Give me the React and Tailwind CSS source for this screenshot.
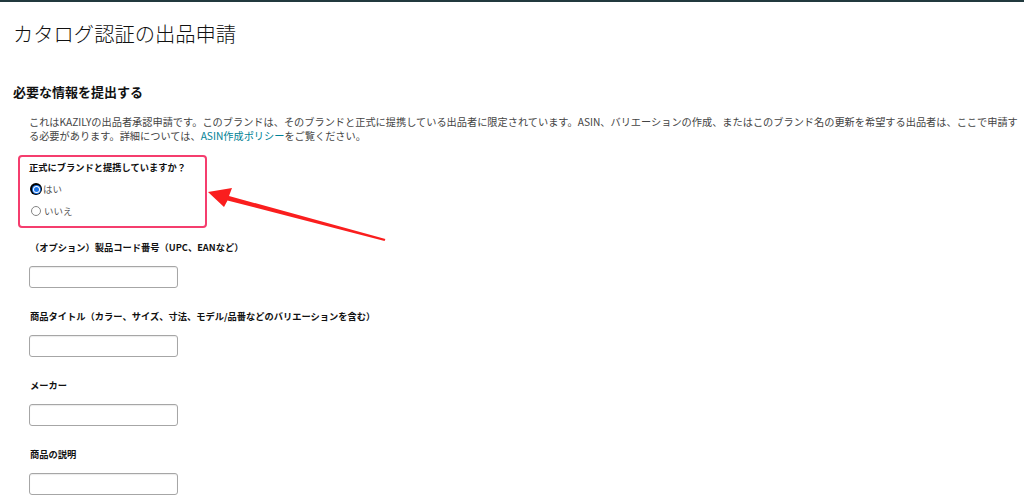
import React from "react";

const jp = { fontFamily: '"Noto Sans CJK JP", "Noto Sans", sans-serif' };

function Field({ label }) {
  return (
    <div className="mb-[21px]">
      <div className="pl-[30px] text-[9.25px] leading-[14px] font-bold text-[#111] mb-[12px]">{label}</div>
      <div className="pl-[29px]">
        <input
          type="text"
          className="block w-[149px] h-[22px] border border-[#a6a6a6] rounded-[3px] bg-white shadow-[inset_0_1px_1px_rgba(0,0,0,0.08)] outline-none"
        />
      </div>
    </div>
  );
}

function Radio({ checked, label }) {
  return (
    <div className="flex items-center h-[22px] pl-[10px]">
      {checked ? (
        <span className="w-[12px] h-[12px] rounded-full bg-black p-[1.5px] flex">
          <span className="w-full h-full rounded-full bg-[#1a73e8] p-[1px] flex">
            <span className="w-full h-full rounded-full bg-white p-[1px] flex">
              <span className="w-full h-full rounded-full bg-[#1a73e8]" />
            </span>
          </span>
        </span>
      ) : (
        <span className="w-[10px] h-[10px] ml-[1px] rounded-full border border-[#858585] bg-white" />
      )}
      <span className={"text-[9.5px] text-[#555] " + (checked ? "ml-[1px]" : "ml-[3px]")}>{label}</span>
    </div>
  );
}

export default function App() {
  return (
    <div className="relative w-[1024px] h-[502px] overflow-hidden bg-white border-t-2 border-[#21393d]" style={jp}>
      {/* page title */}
      <h1 className="pt-[17px] pl-[13px] text-[20.3px] leading-[28px] font-light text-[#111]">
        カタログ認証の出品申請
      </h1>

      <h2 className="mt-[36px] pl-[13px] text-[13px] leading-[18px] font-bold text-[#111]">
        必要な情報を提出する
      </h2>

      <p className="mt-[14px] pl-[29px] text-[10.2px] leading-[14px] text-[#444] whitespace-nowrap">
        これはKAZILYの出品者承認申請です。このブランドは、そのブランドと正式に提携している出品者に限定されています。ASIN、バリエーションの作成、またはこのブランド名の更新を希望する出品者は、ここで申請す
        <br />
        る必要があります。詳細については、<span className="text-[#008296]">ASIN作成ポリシー</span>をご覧ください。
      </p>

      {/* highlighted question */}
      <div className="mt-[12px] ml-[18px] w-[189px] border-2 border-[#f53d6e] rounded-[4px] pt-[3px] pb-[4px]">
        <div className="pl-[9px] text-[9.25px] leading-[14px] font-bold text-[#111] mb-[4px]">
          正式にブランドと提携していますか？
        </div>
        <Radio checked label="はい" />
        <Radio label="いいえ" />
      </div>

      <div className="mt-[12px]">
        <Field label="（オプション）製品コード番号（UPC、EANなど）" />
        <Field label="商品タイトル（カラー、サイズ、寸法、モデル/品番などのバリエーションを含む）" />
        <Field label="メーカー" />
        <Field label="商品の説明" />
      </div>

      {/* annotation arrow */}
      <svg className="absolute inset-0 pointer-events-none" width="1024" height="502" viewBox="0 0 1024 502">
        <polygon
          points="208,190 232,186 229,194 385.4,237 384.6,239 227.5,198.5 224,205"
          fill="#fa1e1e"
        />
      </svg>
    </div>
  );
}
